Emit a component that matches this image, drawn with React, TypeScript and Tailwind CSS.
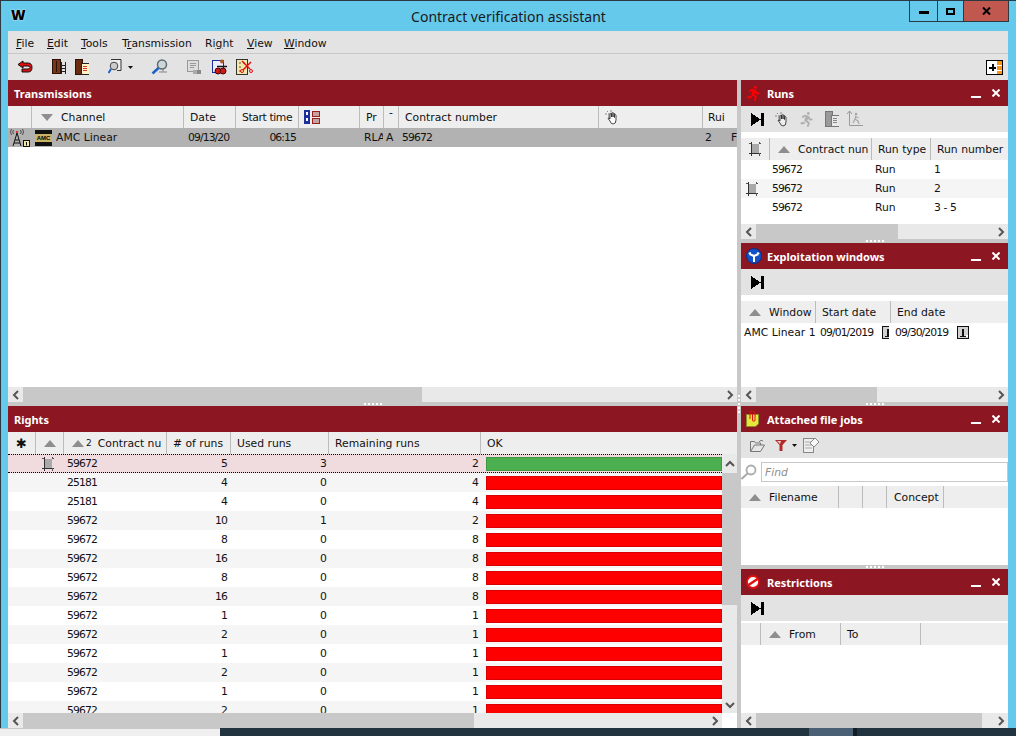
import React from 'react'
import { FaRunning } from 'react-icons/fa'

const Tri = ({ down }: { down?: boolean }) => (
    <svg width="12" height="7" viewBox="0 0 12 7" className="shrink-0">
        <polygon points={down ? '0,0 12,0 6,7' : '6,0 12,7 0,7'} fill="#8e8e8e" />
    </svg>
)

const Marker = () => (
    <svg width="12" height="14" viewBox="0 0 12 14" shapeRendering="crispEdges" className="shrink-0">
        <rect x="3" y="2" width="7" height="9" fill="#a9a9a9" />
        <path d="M2.500 0v14M0 11.500h12" stroke="#333" fill="none" />
        <path d="M0 1.500h2M10 1.500h2M10.500 0v2M10.500 11v3" stroke="#555" fill="none" />
    </svg>
)

const SkipEnd = () => (
    <svg width="13" height="13" viewBox="0 0 13 13" shapeRendering="crispEdges" className="shrink-0">
        <polygon points="0,0 10,6.5 0,13" fill="#000" />
        <rect x="10" y="0" width="3" height="13" fill="#000" />
    </svg>
)

const CalBox = () => (
    <svg width="12" height="13" viewBox="0 0 12 13" shapeRendering="crispEdges" className="shrink-0">
        <rect x="0.5" y="0.5" width="11" height="12" fill="#d0d0d0" stroke="#111" />
        <path d="M5 3h2v7H5zM3 10h6v1H3z" fill="#111" />
        <path d="M9 9h2v2H9z" fill="#fff" />
    </svg>
)

const Chevron = ({ dir }: { dir: 'l' | 'r' | 'u' | 'd' }) => {
    const paths = { l: 'M7 1L3 5l4 4', r: 'M3 1l4 4-4 4', u: 'M1 7l4-4 4 4', d: 'M1 3l4 4 4-4' }
    return (
        <svg width="10" height="10" viewBox="0 0 10 10" className="shrink-0">
            <path d={paths[dir]} fill="none" stroke="#555" strokeWidth="2" />
        </svg>
    )
}

const HScroll = ({ thumb, corner }: { thumb: string; corner?: boolean }) => (
    <div className="h-[15px] flex shrink-0 bg-white">
        <div className="flex-1 flex bg-[#e9e9e9]">
            <div className="w-[15px] flex items-center justify-center"><Chevron dir="l" /></div>
            <div className={`${thumb} bg-[#c8c8c8]`} />
            <div className="flex-1" />
            <div className="w-[15px] flex items-center justify-center"><Chevron dir="r" /></div>
        </div>
        {corner && <div className="w-[15px] bg-white" />}
    </div>
)

const Splitter = () => (
    <div className="h-[4px] shrink-0 bg-[#c8c8c8] flex items-center justify-center gap-[2px]">
        {[0, 1, 2, 3, 4].map((i) => <div key={i} className="w-[2px] h-[2px] bg-white" />)}
    </div>
)

const PanelHeader = ({ title, icon, controls = true }: { title: string; icon?: React.ReactNode; controls?: boolean }) => (
    <div className="h-[26px] shrink-0 bg-[#8c1622] flex items-center text-white font-bold text-[11px] font-['Noto_Sans']">
        {icon ? <div className="w-[26px] pl-[5px] flex items-center shrink-0">{icon}</div> : <div className="w-[6px]" />}
        <span className="flex-1 whitespace-nowrap pt-[1px]">{title}</span>
        {controls && (
            <div className="flex self-start">
                <div className="w-[10px] h-[2px] bg-white mt-[16px] mr-[11px]" />
                <svg width="8" height="8" viewBox="0 0 8 8" className="mt-[9px] mr-[8px]">
                    <path d="M0.5 0.5l7 7M7.5 0.5l-7 7" stroke="#fff" strokeWidth="2" />
                </svg>
            </div>
        )}
    </div>
)

const Head = ({ className = '', children }: { className?: string; children?: React.ReactNode }) => (
    <div className={`h-full shrink-0 flex items-center overflow-hidden whitespace-nowrap border-r border-[#bcbcbc] ${className}`}>
        {children}
    </div>
)

const HeadRow = ({ children }: { children: React.ReactNode }) => (
    <div className="h-[22px] shrink-0 flex bg-[#eeeeee] text-[#111]">{children}</div>
)

const Cell = ({ className = '', children }: { className?: string; children?: React.ReactNode }) => (
    <div className={`h-full shrink-0 flex items-center overflow-hidden whitespace-nowrap ${className}`}>{children}</div>
)

const Toolbar = ({ children }: { children?: React.ReactNode }) => (
    <div className="h-[26px] shrink-0 bg-[#e3e3e3] flex items-center pl-[10px]">{children}</div>
)

const Runner = ({ color, size = 15 }: { color: string; size?: number }) => <FaRunning size={size} color={color} />

const HandIcon = ({ color = '#fff' }: { color?: string }) => (
    <svg width="16" height="15" viewBox="0 0 16 15" className="shrink-0">
        <path d="M0 4h2M2 1l1 1M6 0v2M3 7h1" stroke="#888" fill="none" />
        <rect x="3" y="3" width="4" height="5" fill="#aaa" />
        <path d="M5 9V4q1-1 1.500 0V7V3q1-1 1.500 0V7V3.500q1-1 1.500 0V7.500V5q1-1 1.500 0V10q0 4-3 4H8Q6 14 5 11L3 8.500q1-1 2 .5" fill={color} stroke="#333" strokeWidth=".9" />
    </svg>
)

const DoorDoc = ({ gray }: { gray?: boolean }) => (
    <svg width="14" height="16" viewBox="0 0 14 16" shapeRendering="crispEdges" className="shrink-0">
        <rect x="0" y="0" width="7" height="15" fill={gray ? '#9a9a9a' : '#6b2b10'} stroke={gray ? '#777' : '#2b1206'} />
        <rect x="6" y="4" width="8" height="11" fill={gray ? '#e8e8e8' : '#fff3c8'} stroke={gray ? '#777' : '#222'} />
        <path d="M8 7h4M8 9h4M8 11h4" stroke={gray ? '#888' : '#d03030'} />
    </svg>
)

const DoorLadder = () => (
    <svg width="15" height="16" viewBox="0 0 15 16" shapeRendering="crispEdges" className="shrink-0">
        <rect x="0.500" y="0.500" width="8" height="14" fill="#7a3416" stroke="#2a1206" />
        <path d="M4 2v11" stroke="#2a1206" />
        <path d="M9.500 3v12M13.500 3v12M9 6h5M9 9h5M9 12h5" stroke="#222" />
    </svg>
)

const BackArrow = () => (
    <svg width="16" height="14" viewBox="0 0 16 14" className="shrink-0">
        <path d="M6 1L1 4.500 6 8V6h5q2 0 2 1.500T11 9H5v3h6q4 0 4-4.500T11 3H6z" fill="#e01010" stroke="#111" strokeWidth="1" />
    </svg>
)

const DocSearch = () => (
    <svg width="14" height="16" viewBox="0 0 14 16" className="shrink-0">
        <path d="M3 .5h10v11H9" fill="#eee" stroke="#333" />
        <circle cx="6" cy="7" r="3.800" fill="#ccc" stroke="#444" />
        <path d="M3 10L.5 14" stroke="#1c62c8" strokeWidth="2" />
    </svg>
)

const Magnifier = () => (
    <svg width="18" height="16" viewBox="0 0 18 16" className="shrink-0">
        <circle cx="11" cy="5.500" r="4.500" fill="#cfd6da" stroke="#5b6b74" strokeWidth="1.500" />
        <path d="M7.500 9L1.500 14.500" stroke="#1c62c8" strokeWidth="2.500" />
        <path d="M8 13h8M12 10v3" stroke="#888" />
    </svg>
)

const ChainDoc = () => (
    <svg width="15" height="15" viewBox="0 0 15 15" shapeRendering="crispEdges" className="shrink-0">
        <rect x="0.500" y="0.500" width="11" height="11" fill="#ddd" stroke="#999" />
        <path d="M3 3h6M3 5h6M3 7h4" stroke="#999" />
        <rect x="6" y="10" width="4" height="4" fill="#aaa" />
        <rect x="10" y="10" width="4" height="4" fill="#888" />
    </svg>
)

const StampDoc = () => (
    <svg width="16" height="16" viewBox="0 0 16 16" className="shrink-0">
        <rect x="0.500" y="1.500" width="11" height="12" fill="#eef" stroke="#1a2f9c" />
        <circle cx="10" cy="2.500" r="2" fill="#b05a20" />
        <path d="M5 7.500h10" stroke="#111" strokeWidth="1.500" />
        <circle cx="6" cy="12" r="3" fill="#d01818" stroke="#400" />
        <circle cx="11" cy="12" r="3" fill="#d01818" stroke="#400" />
    </svg>
)

const ScissorDoc = () => (
    <svg width="17" height="16" viewBox="0 0 17 16" className="shrink-0">
        <rect x="0.500" y="0.500" width="11" height="15" fill="#f3e6a8" stroke="#333" />
        <path d="M3 4h2M7 4h2M3 8h2M3 12h2" stroke="#555" />
        <path d="M6 2l8 8M15 3l-8 8" stroke="#e01010" strokeWidth="1.500" />
        <circle cx="15" cy="12" r="1.500" fill="none" stroke="#e01010" />
        <circle cx="6" cy="12" r="1.500" fill="none" stroke="#e01010" />
    </svg>
)

const PlusBox = () => (
    <svg width="17" height="15" viewBox="0 0 17 15" shapeRendering="crispEdges" className="shrink-0">
        <rect x="0.500" y="0.500" width="16" height="14" fill="#fff" stroke="#000" />
        <rect x="11" y="1" width="5" height="13" fill="#f7941d" />
        <path d="M11 5h5M11 10h5" stroke="#fff" />
        <path d="M3 7.500h7M6.500 4v7" stroke="#000" strokeWidth="2" />
    </svg>
)

const Film = () => (
    <svg width="16" height="14" viewBox="0 0 16 14" shapeRendering="crispEdges" className="shrink-0">
        <path d="M0 0h6v14H0z" fill="#1d2f9c" />
        <path d="M2 2h2v3H2zM2 8h2v3H2z" fill="#fff" />
        <rect x="8" y="1" width="7" height="5" fill="#c9a0a0" stroke="#962020" />
        <rect x="8" y="8" width="7" height="5" fill="#c9a0a0" stroke="#962020" />
    </svg>
)

const Tower = () => (
    <svg width="20" height="18" viewBox="0 0 20 18" className="shrink-0">
        <circle cx="7" cy="3" r="1" fill="#e01010" />
        <path d="M3.500 1Q2 3 3.500 5M10.500 1Q12 3 10.500 5M1.500 0Q-.5 3 1.500 6M12.500 0Q14.500 3 12.500 6" fill="none" stroke="#333" strokeWidth=".8" />
        <path d="M7 4L3 17M7 4l4 13M5 11h4M4 14h6" fill="none" stroke="#111" />
        <rect x="13.500" y="11.500" width="6" height="6" fill="#f3e6a8" stroke="#111" />
        <path d="M16.500 13v3.500" stroke="#111" />
    </svg>
)

const AmcLogo = () => (
    <div className="w-[17px] h-[16px] shrink-0 bg-[#111] flex items-center">
        <div className="w-full h-[8px] bg-[#c9b368] flex items-center justify-center text-[6px] leading-none font-bold text-black font-['Liberation_Sans']">AMC</div>
    </div>
)

const BlueRoad = () => (
    <svg width="16" height="16" viewBox="0 0 16 16" className="shrink-0">
        <circle cx="8" cy="8" r="7.500" fill="#1450c8" stroke="#0a2f80" />
        <path d="M8 14V8M8 8L3.500 6M8 8l4.500-2" stroke="#fff" strokeWidth="2" />
        <path d="M2 5l3-1-.5 3zM14 5l-3-1 .5 3z" fill="#fff" />
    </svg>
)

const NoteClip = () => (
    <svg width="13" height="16" viewBox="0 0 13 16" className="shrink-0">
        <path d="M.5 3.500h12V13l-3 2.500H.5z" fill="#e6e63c" stroke="#8f8f2a" />
        <path d="M4 8V2.500a2.500 2.500 0 015 0V9a1.200 1.200 0 01-2.500 0V3" fill="none" stroke="#e01010" strokeWidth="1" />
    </svg>
)

const NoEntry = () => (
    <svg width="14" height="14" viewBox="0 0 14 14" className="shrink-0">
        <circle cx="7" cy="7" r="6" fill="#fff" stroke="#e01010" strokeWidth="1.800" />
        <path d="M2.500 10L11.500 4" stroke="#e01010" strokeWidth="2.400" />
    </svg>
)

const Folder = () => (
    <svg width="15" height="13" viewBox="0 0 15 13" className="shrink-0">
        <path d="M.5 12.500V2.500h4l1 1.500h5v2M.5 12.500h10l4-6.500h-10z" fill="#e6e6e6" stroke="#777" />
        <path d="M9 3q2-3 4-1" fill="none" stroke="#777" />
    </svg>
)

const Funnel = () => (
    <svg width="12" height="11" viewBox="0 0 12 11" className="shrink-0">
        <path d="M0 0h12L7.500 5v6h-3V5z" fill="#b22a2a" />
        <path d="M2 1h4L5 4z" fill="#f0c8c8" />
    </svg>
)

const DocPencil = () => (
    <svg width="16" height="16" viewBox="0 0 16 16" className="shrink-0">
        <rect x="0.500" y="1.500" width="10" height="14" fill="#eee" stroke="#888" />
        <path d="M2 5h7M2 8h7M2 11h7" stroke="#aaa" />
        <path d="M7 6l5-5 4 4-5 5z" fill="#f8f8f8" stroke="#888" />
    </svg>
)

const GrayChart = () => (
    <svg width="16" height="16" viewBox="0 0 16 16" className="shrink-0">
        <path d="M2.500 0v14.500H16M0 3l2.500-3L5 3" fill="none" stroke="#999" />
        <circle cx="9" cy="3" r="1.300" fill="#aaa" />
        <path d="M9 4.500L8 8l3 2 1 3M8 8l-2 4M8.500 5.500L11.500 7" fill="none" stroke="#aaa" strokeWidth="1.300" />
    </svg>
)

const FindGlass = () => (
    <svg width="16" height="16" viewBox="0 0 16 16" className="shrink-0">
        <circle cx="10" cy="6" r="4.500" fill="#fff" stroke="#aaa" strokeWidth="1.800" />
        <path d="M6.500 9.500L0.500 15" stroke="#aaa" strokeWidth="2" />
    </svg>
)

const Caret = () => (
    <svg width="5" height="3" viewBox="0 0 5 3" className="shrink-0"><polygon points="0,0 5,0 2.500,3" fill="#111" /></svg>
)

const RIGHTS = [
    { contract: '59672', runs: 5, used: 3, remaining: 2 },
    { contract: '25181', runs: 4, used: 0, remaining: 4 },
    { contract: '25181', runs: 4, used: 0, remaining: 4 },
    { contract: '59672', runs: 10, used: 1, remaining: 2 },
    { contract: '59672', runs: 8, used: 0, remaining: 8 },
    { contract: '59672', runs: 16, used: 0, remaining: 8 },
    { contract: '59672', runs: 8, used: 0, remaining: 8 },
    { contract: '59672', runs: 16, used: 0, remaining: 8 },
    { contract: '59672', runs: 1, used: 0, remaining: 1 },
    { contract: '59672', runs: 2, used: 0, remaining: 1 },
    { contract: '59672', runs: 1, used: 0, remaining: 1 },
    { contract: '59672', runs: 2, used: 0, remaining: 1 },
    { contract: '59672', runs: 1, used: 0, remaining: 1 },
    { contract: '59672', runs: 2, used: 0, remaining: 1 },
]

const RUNS = [
    { number: '1', marked: false },
    { number: '2', marked: true },
    { number: '3 - 5', marked: false },
]

const MENU = [
    { w: 'w-[31px]', a: '', u: 'F', b: 'ile' },
    { w: 'w-[34px]', a: '', u: 'E', b: 'dit' },
    { w: 'w-[41px]', a: '', u: 'T', b: 'ools' },
    { w: 'w-[83px]', a: 'T', u: 'r', b: 'ansmission' },
    { w: 'w-[42px]', a: 'Ri', u: 'g', b: 'ht' },
    { w: 'w-[37px]', a: '', u: 'V', b: 'iew' },
    { w: 'w-[60px]', a: '', u: 'W', b: 'indow' },
]

const TransmissionsPanel = () => (
    <div className="h-[326px] shrink-0 flex flex-col bg-white">
        <PanelHeader title="Transmissions" controls={false} />
        <HeadRow>
            <Head className="w-[24px]" />
            <Head className="w-[152px] pl-[9px]"><Tri down /><span className="ml-[8px]">Channel</span></Head>
            <Head className="w-[52px] pl-[6px]">Date</Head>
            <Head className="w-[63px] pl-[6px] tracking-[-0.4px]">Start time</Head>
            <Head className="w-[61px] pl-[5px]"><Film /></Head>
            <Head className="w-[24px] pl-[6px]">Pr</Head>
            <Head className="w-[15px] pl-[5px] items-start pt-[1px]">-</Head>
            <Head className="w-[200px] pl-[6px]">Contract number</Head>
            <Head className="w-[104px] pl-[6px]"><HandIcon /></Head>
            <Cell className="w-[24px] pl-[5px]">Rui</Cell>
        </HeadRow>
        <div className="h-[19px] shrink-0 flex bg-[#b2b2b2] text-[#111]">
            <Cell className="w-[26px] pl-[2px]"><Tower /></Cell>
            <Cell className="w-[22px] pl-[1px]"><AmcLogo /></Cell>
            <Cell className="w-[128px]">AMC Linear</Cell>
            <Cell className="w-[52px] pl-[4px] tracking-[-0.9px]">09/13/20</Cell>
            <Cell className="w-[63px] pr-[3px] justify-end tracking-[-0.9px]">06:15</Cell>
            <Cell className="w-[61px]" />
            <Cell className="w-[23px] pl-[4px]">RLA</Cell>
            <Cell className="w-[16px] pl-[3px]">A</Cell>
            <Cell className="w-[200px] pl-[3px] tracking-[-0.9px]">59672</Cell>
            <Cell className="w-[104px]" />
            <Cell className="w-[28px] pl-[2px]">2</Cell>
            <Cell className="flex-1">F</Cell>
        </div>
        <div className="flex-1" />
        <HScroll thumb="w-[399px]" />
        <Splitter />
    </div>
)

const RightsPanel = () => (
    <div className="flex-1 min-h-0 flex flex-col bg-white">
        <PanelHeader title="Rights" controls={false} />
        <HeadRow>
            <Head className="w-[28px] justify-center text-[13px] font-bold">✱</Head>
            <Head className="w-[28px] pl-[8px]"><Tri /></Head>
            <Head className="w-[103px] pl-[8px]"><Tri /><span className="ml-[2px] text-[9px]">2</span><span className="ml-[6px]">Contract nu</span></Head>
            <Head className="w-[64px] pl-[6px]"># of runs</Head>
            <Head className="w-[98px] pl-[6px]">Used runs</Head>
            <Head className="w-[152px] pl-[6px]">Remaining runs</Head>
            <Cell className="flex-1 pl-[6px]">OK</Cell>
        </HeadRow>
        <div className="flex-1 min-h-0 flex">
            <div className="w-[714px] overflow-hidden">
                {RIGHTS.map((row, i) => (
                    <div
                        key={i}
                        className={`h-[19px] flex text-[#111] tracking-[-0.9px] ${i === 0 ? 'bg-[#f0dcde] border-y border-dotted border-black' : i % 2 === 1 ? 'bg-[#f5f5f5]' : 'bg-white'}`}
                    >
                        <Cell className="w-[28px]" />
                        <Cell className="w-[28px] pl-[6px]">{i === 0 && <Marker />}</Cell>
                        <Cell className="w-[103px] pl-[3px]">{row.contract}</Cell>
                        <Cell className="w-[64px] pr-[4px] justify-end">{row.runs}</Cell>
                        <Cell className="w-[98px] pr-[3px] justify-end">{row.used}</Cell>
                        <Cell className="w-[152px] pr-[3px] justify-end">{row.remaining}</Cell>
                        <Cell className="flex-1 pl-[5px]">
                            <div className={`w-full h-[14px] border ${i === 0 ? 'bg-[#4caf50] border-[#3d9a42]' : 'bg-[#ff0000] border-[#d80000]'}`} />
                        </Cell>
                    </div>
                ))}
            </div>
            <div className="w-[15px] flex flex-col bg-[#e9e9e9]">
                <div className="h-[19px] flex items-center justify-center shrink-0"><Chevron dir="u" /></div>
                <div className="h-[132px] bg-[#c8c8c8]" />
                <div className="flex-1 flex items-end justify-center pb-[3px]"><Chevron dir="d" /></div>
            </div>
        </div>
        <HScroll thumb="w-[451px]" corner />
    </div>
)

const RunsPanel = () => (
    <div className="h-[163px] shrink-0 flex flex-col bg-white">
        <PanelHeader title="Runs" icon={<Runner color="#ff0000" />} />
        <Toolbar>
            <SkipEnd />
            <div className="ml-[11px]"><HandIcon color="#eee" /></div>
            <div className="ml-[8px]"><Runner color="#b0b0b0" /></div>
            <div className="ml-[11px]"><DoorDoc gray /></div>
            <div className="ml-[8px]"><GrayChart /></div>
        </Toolbar>
        <div className="h-[6px] shrink-0" />
        <HeadRow>
            <Head className="w-[29px] pl-[8px]"><Marker /></Head>
            <Head className="w-[102px] pl-[8px]"><Tri /><span className="ml-[8px]">Contract nun</span></Head>
            <Head className="w-[59px] pl-[6px]">Run type</Head>
            <Cell className="flex-1 pl-[6px]">Run number</Cell>
        </HeadRow>
        {RUNS.map((run, i) => (
            <div key={run.number} className={`h-[19px] shrink-0 flex text-[#111] ${i === 1 ? 'bg-[#f5f5f5]' : 'bg-white'}`}>
                <Cell className="w-[29px] pl-[5px]">{run.marked && <Marker />}</Cell>
                <Cell className="w-[102px] pl-[2px] tracking-[-0.9px]">59672</Cell>
                <Cell className="w-[59px] pl-[3px]">Run</Cell>
                <Cell className="flex-1 pl-[3px] tracking-[-0.4px]">{run.number}</Cell>
            </div>
        ))}
        <div className="flex-1" />
        <HScroll thumb="w-[142px]" />
        <Splitter />
    </div>
)

const ExploitationPanel = () => (
    <div className="h-[163px] shrink-0 flex flex-col bg-white">
        <PanelHeader title="Exploitation windows" icon={<BlueRoad />} />
        <Toolbar><SkipEnd /></Toolbar>
        <div className="h-[6px] shrink-0" />
        <HeadRow>
            <Head className="w-[75px] pl-[8px]"><Tri /><span className="ml-[8px]">Window</span></Head>
            <Head className="w-[75px] pl-[6px]">Start date</Head>
            <Cell className="flex-1 pl-[6px]">End date</Cell>
        </HeadRow>
        <div className="h-[19px] shrink-0 flex text-[#111]">
            <Cell className="w-[75px] pl-[3px]">AMC Linear 1</Cell>
            <Cell className="w-[73px] pl-[4px]"><span className="tracking-[-0.9px]">09/01/2019</span><span className="ml-[9px]"><CalBox /></span></Cell>
            <Cell className="flex-1 pl-[6px]"><span className="tracking-[-0.9px]">09/30/2019</span><span className="ml-[9px]"><CalBox /></span></Cell>
        </div>
        <div className="flex-1" />
        <HScroll thumb="w-[121px]" />
        <Splitter />
    </div>
)

const AttachedPanel = () => (
    <div className="h-[163px] shrink-0 flex flex-col bg-white">
        <PanelHeader title="Attached file jobs" icon={<NoteClip />} />
        <Toolbar>
            <div className="-ml-[1px]"><Folder /></div>
            <div className="ml-[10px]"><Funnel /></div>
            <div className="ml-[5px]"><Caret /></div>
            <div className="ml-[6px]"><DocPencil /></div>
        </Toolbar>
        <div className="h-[28px] shrink-0 flex items-center">
            <FindGlass />
            <div className="ml-[4px] flex-1 h-[20px] border border-[#c8c8c8] flex items-center pl-[3px] italic text-[#8f8f8f]">Find</div>
        </div>
        <HeadRow>
            <Head className="w-[98px] pl-[8px]"><Tri /><span className="ml-[8px]">Filename</span></Head>
            <Head className="w-[24px]" />
            <Head className="w-[24px]" />
            <Head className="w-[57px] pl-[7px]">Concept</Head>
        </HeadRow>
        <div className="flex-1" />
        <Splitter />
    </div>
)

const RestrictionsPanel = () => (
    <div className="flex-1 min-h-0 flex flex-col bg-white">
        <PanelHeader title="Restrictions" icon={<NoEntry />} />
        <Toolbar><SkipEnd /></Toolbar>
        <div className="h-[2px] shrink-0" />
        <HeadRow>
            <Head className="w-[20px]" />
            <Head className="w-[80px] pl-[8px]"><Tri /><span className="ml-[8px]">From</span></Head>
            <Head className="w-[80px] pl-[6px]">To</Head>
        </HeadRow>
        <div className="flex-1" />
        <HScroll thumb="w-[226px]" />
    </div>
)

export default function App() {
    return (
        <div className="w-[1016px] h-[736px] overflow-hidden flex flex-col bg-[#20333f] text-[10.8px] leading-[11px] font-['DejaVu_Sans',sans-serif]">
            <div className="h-[728px] shrink-0 flex flex-col bg-[#65c9ec] border-l border-t border-[#2b3a42] pl-[7px] pr-[8px]">
                <div className="h-[30px] shrink-0 grid grid-cols-[1fr_auto_1fr] -ml-[7px] -mr-[8px]">
                    <div className="pl-[10px] pt-[7px] font-['Noto_Sans'] font-black text-[14px] leading-none text-black [text-shadow:0_0_2px_#fff]">W</div>
                    <div className="pt-[9px] text-[14px] leading-none text-[#1a1a1a] font-['Noto_Sans'] whitespace-nowrap">Contract verification assistant</div>
                    <div className="flex justify-end items-start pr-[7px]">
                        <div className="flex h-[21px] border border-t-0 border-[#2b3a42]">
                            <div className="w-[28px] border-r border-[#2b3a42] flex items-center justify-center pt-[3px]"><div className="w-[10px] h-[3px] bg-black" /></div>
                            <div className="w-[26px] border-r border-[#2b3a42] flex items-center justify-center"><div className="w-[9px] h-[7px] border-2 border-black" /></div>
                            <div className="w-[44px] bg-[#c0584f] flex items-center justify-center">
                                <svg width="9" height="8" viewBox="0 0 9 8"><path d="M1 0.500l7 7M8 0.500l-7 7" stroke="#000" strokeWidth="2" /></svg>
                            </div>
                        </div>
                    </div>
                </div>
                <div className="h-[23px] shrink-0 bg-[#e3e3e3] border-b border-[#c8c8c8] flex items-center pl-[8px] pt-[2px] text-[#111]">
                    {MENU.map((m) => (
                        <div key={m.b} className={`${m.w} shrink-0`}>{m.a}<span className="underline">{m.u}</span>{m.b}</div>
                    ))}
                </div>
                <div className="h-[26px] shrink-0 bg-[#e3e3e3] flex items-center pl-[9px] pr-[5px]">
                    <BackArrow />
                    <div className="ml-[19px]"><DoorLadder /></div>
                    <div className="ml-[8px]"><DoorDoc /></div>
                    <div className="ml-[19px]"><DocSearch /></div>
                    <div className="ml-[6px]"><Caret /></div>
                    <div className="ml-[18px]"><Magnifier /></div>
                    <div className="ml-[18px]"><ChainDoc /></div>
                    <div className="ml-[10px]"><StampDoc /></div>
                    <div className="ml-[8px]"><ScissorDoc /></div>
                    <div className="flex-1" />
                    <PlusBox />
                </div>
                <div className="flex-1 min-h-0 flex">
                    <div className="w-[729px] shrink-0 flex flex-col">
                        <TransmissionsPanel />
                        <RightsPanel />
                    </div>
                    <div className="w-[4px] shrink-0 bg-[#c8c8c8] flex flex-col items-center justify-center gap-[2px]">
                        {[0, 1, 2, 3, 4].map((i) => <div key={i} className="w-[2px] h-[2px] bg-white" />)}
                    </div>
                    <div className="w-[267px] shrink-0 flex flex-col">
                        <RunsPanel />
                        <ExploitationPanel />
                        <AttachedPanel />
                        <RestrictionsPanel />
                    </div>
                </div>
            </div>
            <div className="flex-1 flex">
                <div className="w-[220px] bg-[#efefef] border-t border-[#c8c8c8]" />
                <div className="w-[589px]" />
                <div className="w-[44px] bg-[#4a6075]" />
                <div className="w-[4px] bg-[#111c24]" />
            </div>
        </div>
    )
}
